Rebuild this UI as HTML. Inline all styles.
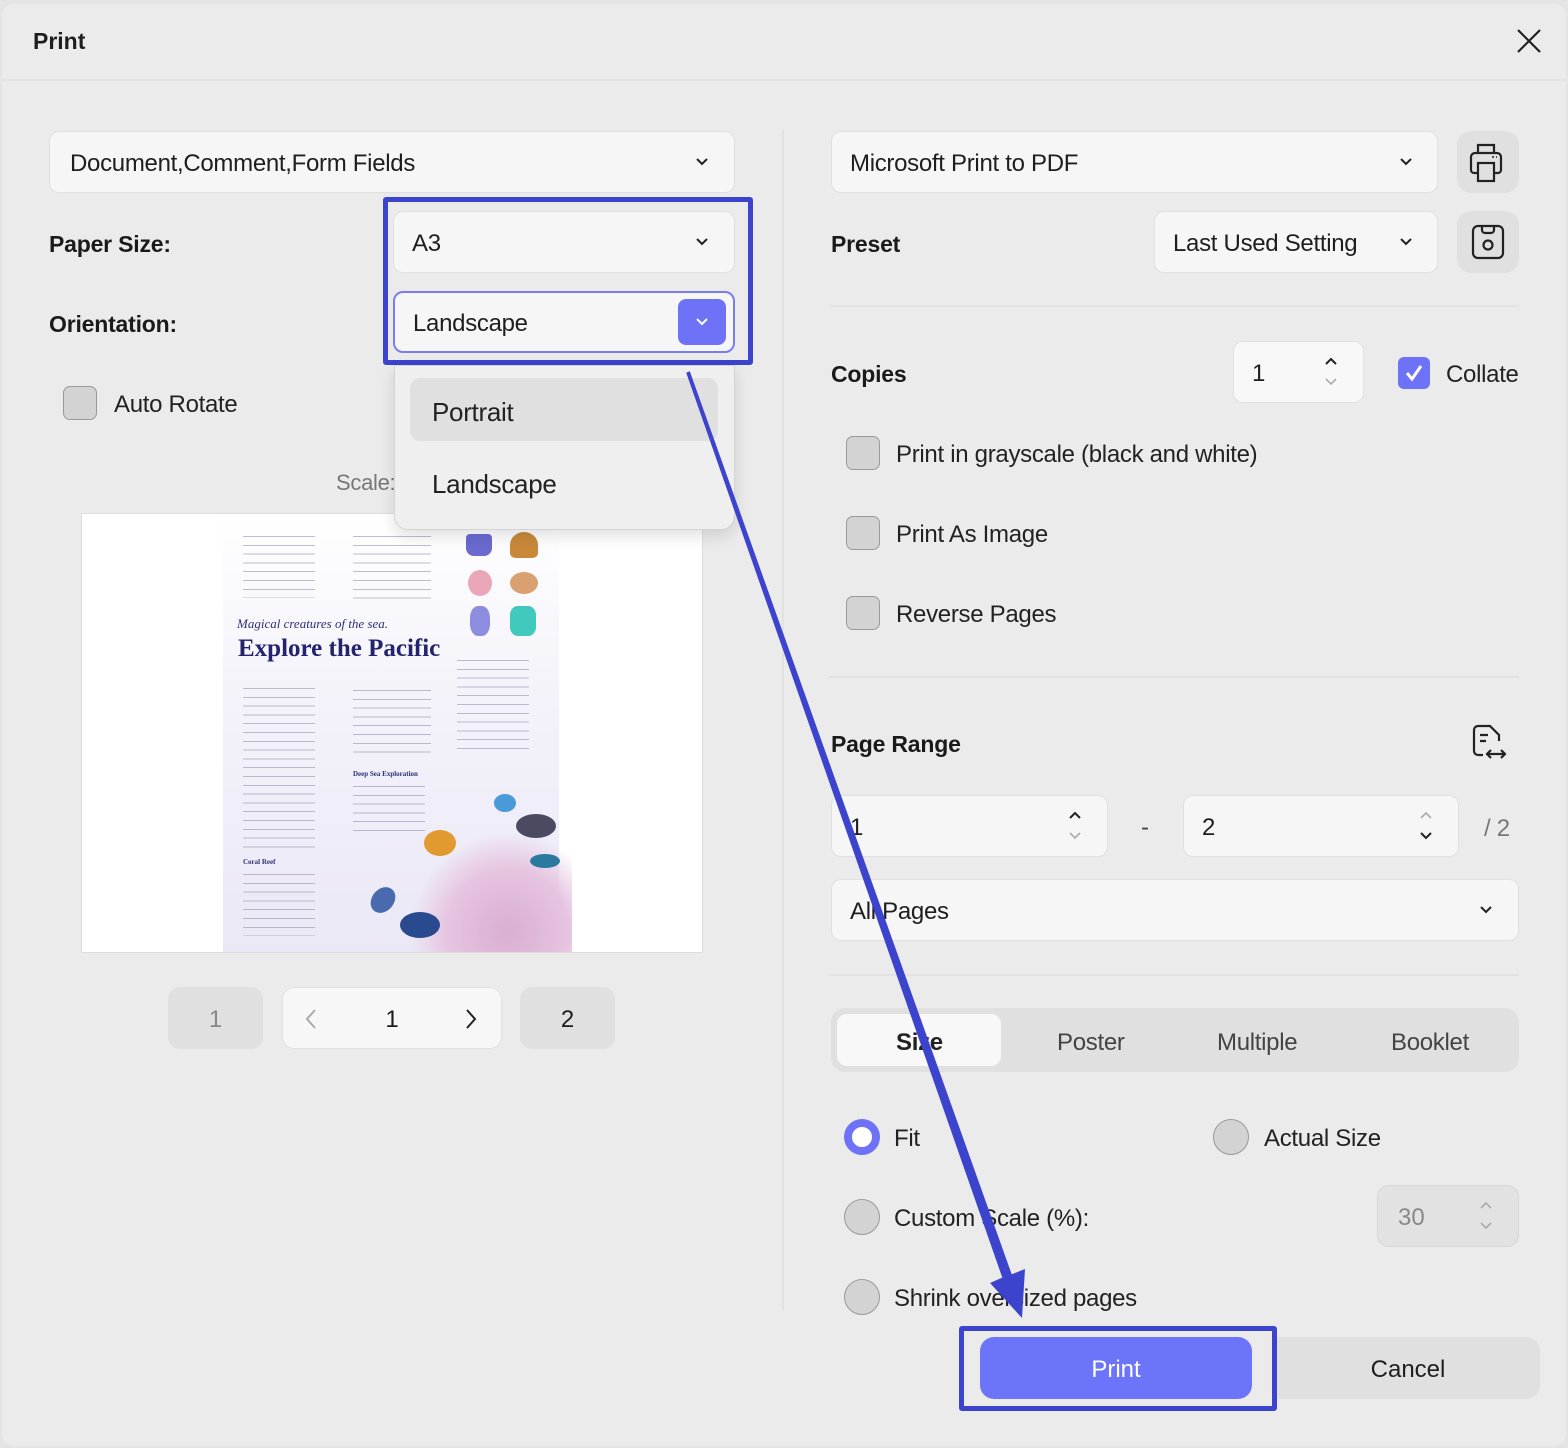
<!DOCTYPE html>
<html><head><meta charset="utf-8">
<style>
*{box-sizing:border-box;margin:0;padding:0}
body{width:1568px;height:1448px;background:#e4e4e4;font-family:"Liberation Sans",sans-serif;color:#1e1e1e;position:relative;overflow:hidden}
.dlg{position:absolute;left:2px;top:4px;width:1564px;height:1442px;background:#ebebeb;border-radius:12px}
.a{position:absolute}
.f{position:absolute;background:#f6f6f6;border:1.5px solid #e0e0e0;border-radius:10px;font-size:24px;display:flex;align-items:center;padding-left:18px;padding-top:4px;letter-spacing:-0.3px}
.lbl{position:absolute;font-size:23px;font-weight:bold;color:#1a1a1a;letter-spacing:-0.2px}
.t{position:absolute;font-size:24px;color:#222;letter-spacing:-0.3px}
.cb{position:absolute;width:34px;height:34px;border-radius:7px;background:#d3d3d3;border:1.5px solid #9a9a9a}
.rd{position:absolute;width:36px;height:36px;border-radius:50%;background:#d3d3d3;border:1.5px solid #9a9a9a}
.dv{position:absolute;height:2px;background:#e2e2e2}
.chev{position:absolute}
.lines{position:absolute;background:repeating-linear-gradient(to bottom,#8a8aa8 0 1px,transparent 1px 8.8px);opacity:.55}
</style></head><body>
<div class="dlg"></div>
<div class="a" style="left:33px;top:28px;font-size:23px;font-weight:bold">Print</div>
<svg class="a" style="left:1515px;top:27px" width="28" height="28"><path d="M3 3L25 25M25 3L3 25" stroke="#222" stroke-width="2.2"/></svg>
<div class="dv" style="left:2px;top:79px;width:1564px"></div>
<div class="a" style="left:782px;top:130px;width:2px;height:1180px;background:#e2e2e2"></div>

<!-- left -->
<div class="f" style="left:49px;top:131px;width:686px;height:62px;padding-left:20px">Document,Comment,Form Fields</div>
<svg class="chev" style="left:695px;top:157px" width="14" height="10"><path d="M2 2L7 7L12 2" fill="none" stroke="#222" stroke-width="2"/></svg>
<div class="lbl" style="left:49px;top:231px">Paper Size:</div>
<div class="f" style="left:393px;top:211px;width:342px;height:62px">A3</div>
<svg class="chev" style="left:695px;top:237px" width="14" height="10"><path d="M2 2L7 7L12 2" fill="none" stroke="#222" stroke-width="2"/></svg>
<div class="lbl" style="left:49px;top:311px">Orientation:</div>
<div class="f" style="left:393px;top:291px;width:342px;height:62px;border:2px solid #7a7cf0">Landscape</div>
<div class="a" style="left:678px;top:299px;width:48px;height:46px;background:#6e72f6;border-radius:8px"></div>
<svg class="chev" style="left:695px;top:317px" width="14" height="10"><path d="M2 2L7 7L12 2" fill="none" stroke="#fff" stroke-width="2"/></svg>
<div class="a" style="left:383px;top:197px;width:370px;height:168px;border:5px solid #3c43cc;border-radius:3px"></div>

<div class="cb" style="left:63px;top:386px"></div>
<div class="t" style="left:114px;top:391px">Auto Rotate</div>
<div class="t" style="left:336px;top:470px;color:#777;font-size:22px">Scale:</div>

<!-- preview -->
<div class="a" style="left:81px;top:513px;width:622px;height:440px;background:#fff;border:1px solid #ddd;overflow:hidden">
  <div class="a" style="left:141px;top:0;width:336px;height:440px;background:linear-gradient(to bottom,#fff 0%,#f4f3fa 40%,#ebe8f6 100%)"></div>
  <div class="lines" style="left:161px;top:22px;width:72px;height:62px"></div>
  <div class="lines" style="left:271px;top:22px;width:78px;height:70px"></div>
  <div class="a" style="left:384px;top:20px;width:26px;height:22px;background:#6a6ad0;border-radius:4px 4px 8px 8px"></div>
  <div class="a" style="left:428px;top:18px;width:28px;height:26px;background:#c8893a;border-radius:50% 50% 20% 20%"></div>
  <div class="a" style="left:386px;top:56px;width:24px;height:26px;background:#e9a7b8;border-radius:50%"></div>
  <div class="a" style="left:428px;top:58px;width:28px;height:22px;background:#d9a070;border-radius:50%"></div>
  <div class="a" style="left:388px;top:92px;width:20px;height:30px;background:#8d8de0;border-radius:40%"></div>
  <div class="a" style="left:428px;top:92px;width:26px;height:30px;background:#40c9bc;border-radius:30%"></div>
  <div class="a" style="left:155px;top:102px;font-family:'Liberation Serif',serif;font-style:italic;font-size:13px;color:#2e2e78">Magical creatures of the sea.</div>
  <div class="a" style="left:156px;top:121px;font-family:'Liberation Serif',serif;font-weight:bold;font-size:25px;color:#24246e;white-space:nowrap">Explore the Pacific</div>
  <div class="lines" style="left:161px;top:174px;width:72px;height:164px"></div>
  <div class="a" style="left:161px;top:344px;font-family:'Liberation Serif',serif;font-weight:bold;font-size:7px;color:#2e2e78">Coral Reef</div>
  <div class="lines" style="left:161px;top:360px;width:72px;height:62px"></div>
  <div class="lines" style="left:271px;top:176px;width:78px;height:70px"></div>
  <div class="a" style="left:271px;top:256px;font-family:'Liberation Serif',serif;font-weight:bold;font-size:7px;color:#2e2e78">Deep Sea Exploration</div>
  <div class="lines" style="left:271px;top:272px;width:72px;height:50px"></div>
  <div class="lines" style="left:375px;top:146px;width:72px;height:90px"></div>
  <div class="a" style="left:330px;top:320px;width:160px;height:140px;background:radial-gradient(ellipse at 60% 70%,#d9aed2 0%,#e6c4e0 45%,rgba(235,220,240,0) 72%)"></div>
  <div class="a" style="left:412px;top:280px;width:22px;height:18px;background:#4a9ad8;border-radius:50%"></div>
  <div class="a" style="left:434px;top:300px;width:40px;height:24px;background:#4a4a60;border-radius:50%"></div>
  <div class="a" style="left:342px;top:316px;width:32px;height:26px;background:#e09a30;border-radius:50%"></div>
  <div class="a" style="left:448px;top:340px;width:30px;height:14px;background:#2a7aa0;border-radius:50%"></div>
  <div class="a" style="left:290px;top:372px;width:22px;height:28px;background:#4a6ab0;border-radius:50%;transform:rotate(40deg)"></div>
  <div class="a" style="left:318px;top:398px;width:40px;height:26px;background:#2a4a90;border-radius:50%"></div>
</div>
<!-- dropdown menu -->
<div class="a" style="left:394px;top:365px;width:341px;height:165px;background:#efefef;border:1px solid #d4d4d4;border-radius:0 0 14px 14px;box-shadow:0 6px 16px rgba(0,0,0,.12)"></div>
<div class="a" style="left:410px;top:378px;width:308px;height:63px;background:#e0e0e0;border-radius:10px"></div>
<div class="t" style="left:432px;top:397px;font-size:26px">Portrait</div>
<div class="t" style="left:432px;top:469px;font-size:26px">Landscape</div>

<div class="a" style="left:168px;top:987px;width:95px;height:62px;background:#e0e0e0;border-radius:12px;font-size:24px;color:#888;display:flex;align-items:center;justify-content:center;padding-top:3px">1</div>
<div class="a" style="left:282px;top:987px;width:220px;height:62px;background:#f7f7f7;border:1px solid #e0e0e0;border-radius:12px;font-size:24px;display:flex;align-items:center;justify-content:center;padding-top:3px">1</div>
<svg class="a" style="left:304px;top:1008px" width="14" height="22"><path d="M11 2L3 11L11 20" fill="none" stroke="#aaa" stroke-width="2"/></svg>
<svg class="a" style="left:464px;top:1008px" width="14" height="22"><path d="M3 2L11 11L3 20" fill="none" stroke="#222" stroke-width="2"/></svg>
<div class="a" style="left:520px;top:987px;width:95px;height:62px;background:#e0e0e0;border-radius:12px;font-size:24px;display:flex;align-items:center;justify-content:center;padding-top:3px">2</div>

<!-- right -->
<div class="f" style="left:831px;top:131px;width:607px;height:62px">Microsoft Print to PDF</div>
<svg class="chev" style="left:1399px;top:157px" width="14" height="10"><path d="M2 2L7 7L12 2" fill="none" stroke="#222" stroke-width="2"/></svg>
<div class="a" style="left:1457px;top:131px;width:62px;height:62px;background:#e0e0e0;border-radius:14px"></div>
<svg class="a" style="left:1468px;top:140px" width="40" height="44" viewBox="0 0 40 44"><path d="M10 13V5h16v8M10 33H6a3 3 0 0 1-3-3V17a4 4 0 0 1 4-4h22a4 4 0 0 1 4 4v13a3 3 0 0 1-3 3h-4" fill="none" stroke="#222" stroke-width="2.2"/><rect x="10" y="23" width="16" height="18" fill="#e0e0e0" stroke="#222" stroke-width="2.2"/><path d="M24 17h2M28 17h1" stroke="#222" stroke-width="1.6"/></svg>
<div class="lbl" style="left:831px;top:231px">Preset</div>
<div class="f" style="left:1154px;top:211px;width:284px;height:62px">Last Used Setting</div>
<svg class="chev" style="left:1399px;top:237px" width="14" height="10"><path d="M2 2L7 7L12 2" fill="none" stroke="#222" stroke-width="2"/></svg>
<div class="a" style="left:1457px;top:211px;width:62px;height:62px;background:#e0e0e0;border-radius:14px"></div>
<svg class="a" style="left:1470px;top:223px" width="36" height="40" viewBox="0 0 36 40"><rect x="3" y="3" width="30" height="32" rx="5" fill="none" stroke="#222" stroke-width="2.2"/><path d="M12 3v4a3 3 0 0 0 3 3h6a3 3 0 0 0 3-3V3" fill="none" stroke="#222" stroke-width="2.2"/><circle cx="18" cy="22" r="4.5" fill="none" stroke="#222" stroke-width="2.2"/></svg>
<div class="dv" style="left:829px;top:305px;width:690px"></div>

<div class="lbl" style="left:831px;top:361px">Copies</div>
<div class="f" style="left:1233px;top:341px;width:131px;height:62px;background:#f8f8f8">1</div>
<svg class="a" style="left:1324px;top:355px" width="14" height="34"><path d="M2 9L7 4L12 9" fill="none" stroke="#222" stroke-width="2"/><path d="M2 24L7 29L12 24" fill="none" stroke="#aaa" stroke-width="1.6"/></svg>
<div class="a" style="left:1398px;top:357px;width:32px;height:32px;background:#6e72f6;border-radius:6px"></div>
<svg class="a" style="left:1403px;top:362px" width="22" height="22"><path d="M4 11L9 17L18 4" fill="none" stroke="#fff" stroke-width="3"/></svg>
<div class="t" style="left:1446px;top:361px">Collate</div>
<div class="cb" style="left:846px;top:436px"></div><div class="t" style="left:896px;top:441px">Print in grayscale (black and white)</div>
<div class="cb" style="left:846px;top:516px"></div><div class="t" style="left:896px;top:521px">Print As Image</div>
<div class="cb" style="left:846px;top:596px"></div><div class="t" style="left:896px;top:601px">Reverse Pages</div>
<div class="dv" style="left:829px;top:676px;width:690px"></div>

<div class="lbl" style="left:831px;top:731px">Page Range</div>
<svg class="a" style="left:1470px;top:722px" width="40" height="40" viewBox="0 0 40 40"><path d="M13 33H8a4 4 0 0 1-4-4V8a4 4 0 0 1 4-4h12l9 9v6" fill="none" stroke="#222" stroke-width="2.2"/><path d="M10 13h8M10 19h6" stroke="#222" stroke-width="2.2"/><path d="M17 32h18M21 28l-4 4 4 4M31 28l4 4-4 4" fill="none" stroke="#222" stroke-width="2.2"/></svg>
<div class="f" style="left:831px;top:795px;width:277px;height:62px">1</div>
<svg class="a" style="left:1068px;top:809px" width="14" height="34"><path d="M2 9L7 4L12 9" fill="none" stroke="#222" stroke-width="2"/><path d="M2 24L7 29L12 24" fill="none" stroke="#aaa" stroke-width="1.6"/></svg>
<div class="t" style="left:1141px;top:814px;color:#444">-</div>
<div class="f" style="left:1183px;top:795px;width:276px;height:62px">2</div>
<svg class="a" style="left:1419px;top:809px" width="14" height="34"><path d="M2 9L7 4L12 9" fill="none" stroke="#aaa" stroke-width="1.6"/><path d="M2 24L7 29L12 24" fill="none" stroke="#222" stroke-width="2"/></svg>
<div class="t" style="left:1484px;top:815px;color:#777">/ 2</div>
<div class="f" style="left:831px;top:879px;width:688px;height:62px">All Pages</div>
<svg class="chev" style="left:1479px;top:905px" width="14" height="10"><path d="M2 2L7 7L12 2" fill="none" stroke="#222" stroke-width="2"/></svg>
<div class="dv" style="left:829px;top:974px;width:690px"></div>

<div class="a" style="left:831px;top:1008px;width:688px;height:64px;background:#e0e0e0;border-radius:14px"></div>
<div class="a" style="left:837px;top:1014px;width:164px;height:52px;background:#f8f8f8;border-radius:10px"></div>
<div class="t" style="left:896px;top:1029px;font-weight:bold">Size</div>
<div class="t" style="left:1057px;top:1029px;color:#444">Poster</div>
<div class="t" style="left:1217px;top:1029px;color:#444">Multiple</div>
<div class="t" style="left:1391px;top:1029px;color:#444">Booklet</div>

<div class="a" style="left:844px;top:1119px;width:36px;height:36px;border-radius:50%;background:#fff;border:8px solid #6e72f6"></div>
<div class="t" style="left:894px;top:1125px">Fit</div>
<div class="rd" style="left:1213px;top:1119px"></div><div class="t" style="left:1264px;top:1125px">Actual Size</div>
<div class="rd" style="left:844px;top:1199px"></div><div class="t" style="left:894px;top:1205px">Custom Scale (%):</div>
<div class="a" style="left:1377px;top:1185px;width:142px;height:62px;background:#e2e2e2;border:1.5px solid #d6d6d6;border-radius:12px;font-size:24px;color:#888;padding-left:20px;padding-top:3px;display:flex;align-items:center">30</div>
<svg class="a" style="left:1479px;top:1199px" width="14" height="34"><path d="M2 9L7 4L12 9" fill="none" stroke="#aaa" stroke-width="1.6"/><path d="M2 24L7 29L12 24" fill="none" stroke="#aaa" stroke-width="1.6"/></svg>
<div class="rd" style="left:844px;top:1279px"></div><div class="t" style="left:894px;top:1285px">Shrink oversized pages</div>

<div class="a" style="left:1276px;top:1337px;width:264px;height:62px;background:#e0e0e0;border-radius:0 14px 14px 0;font-size:24px;display:flex;align-items:center;justify-content:center;padding-top:3px">Cancel</div>
<div class="a" style="left:980px;top:1337px;width:272px;height:62px;background:#6c74fa;border-radius:14px;color:#fff;font-size:24px;display:flex;align-items:center;justify-content:center;padding-top:3px">Print</div>
<div class="a" style="left:959px;top:1326px;width:318px;height:85px;border:5px solid #3c43cc;border-radius:3px"></div>

<svg class="a" style="left:0;top:0" width="1568" height="1448"><polygon points="686.2,372.7 689.8,371.3 1011.7,1274.3 1025,1269 1022,1318 990,1283 1002.3,1277.6" fill="#3c43cc"/></svg>
</body></html>
